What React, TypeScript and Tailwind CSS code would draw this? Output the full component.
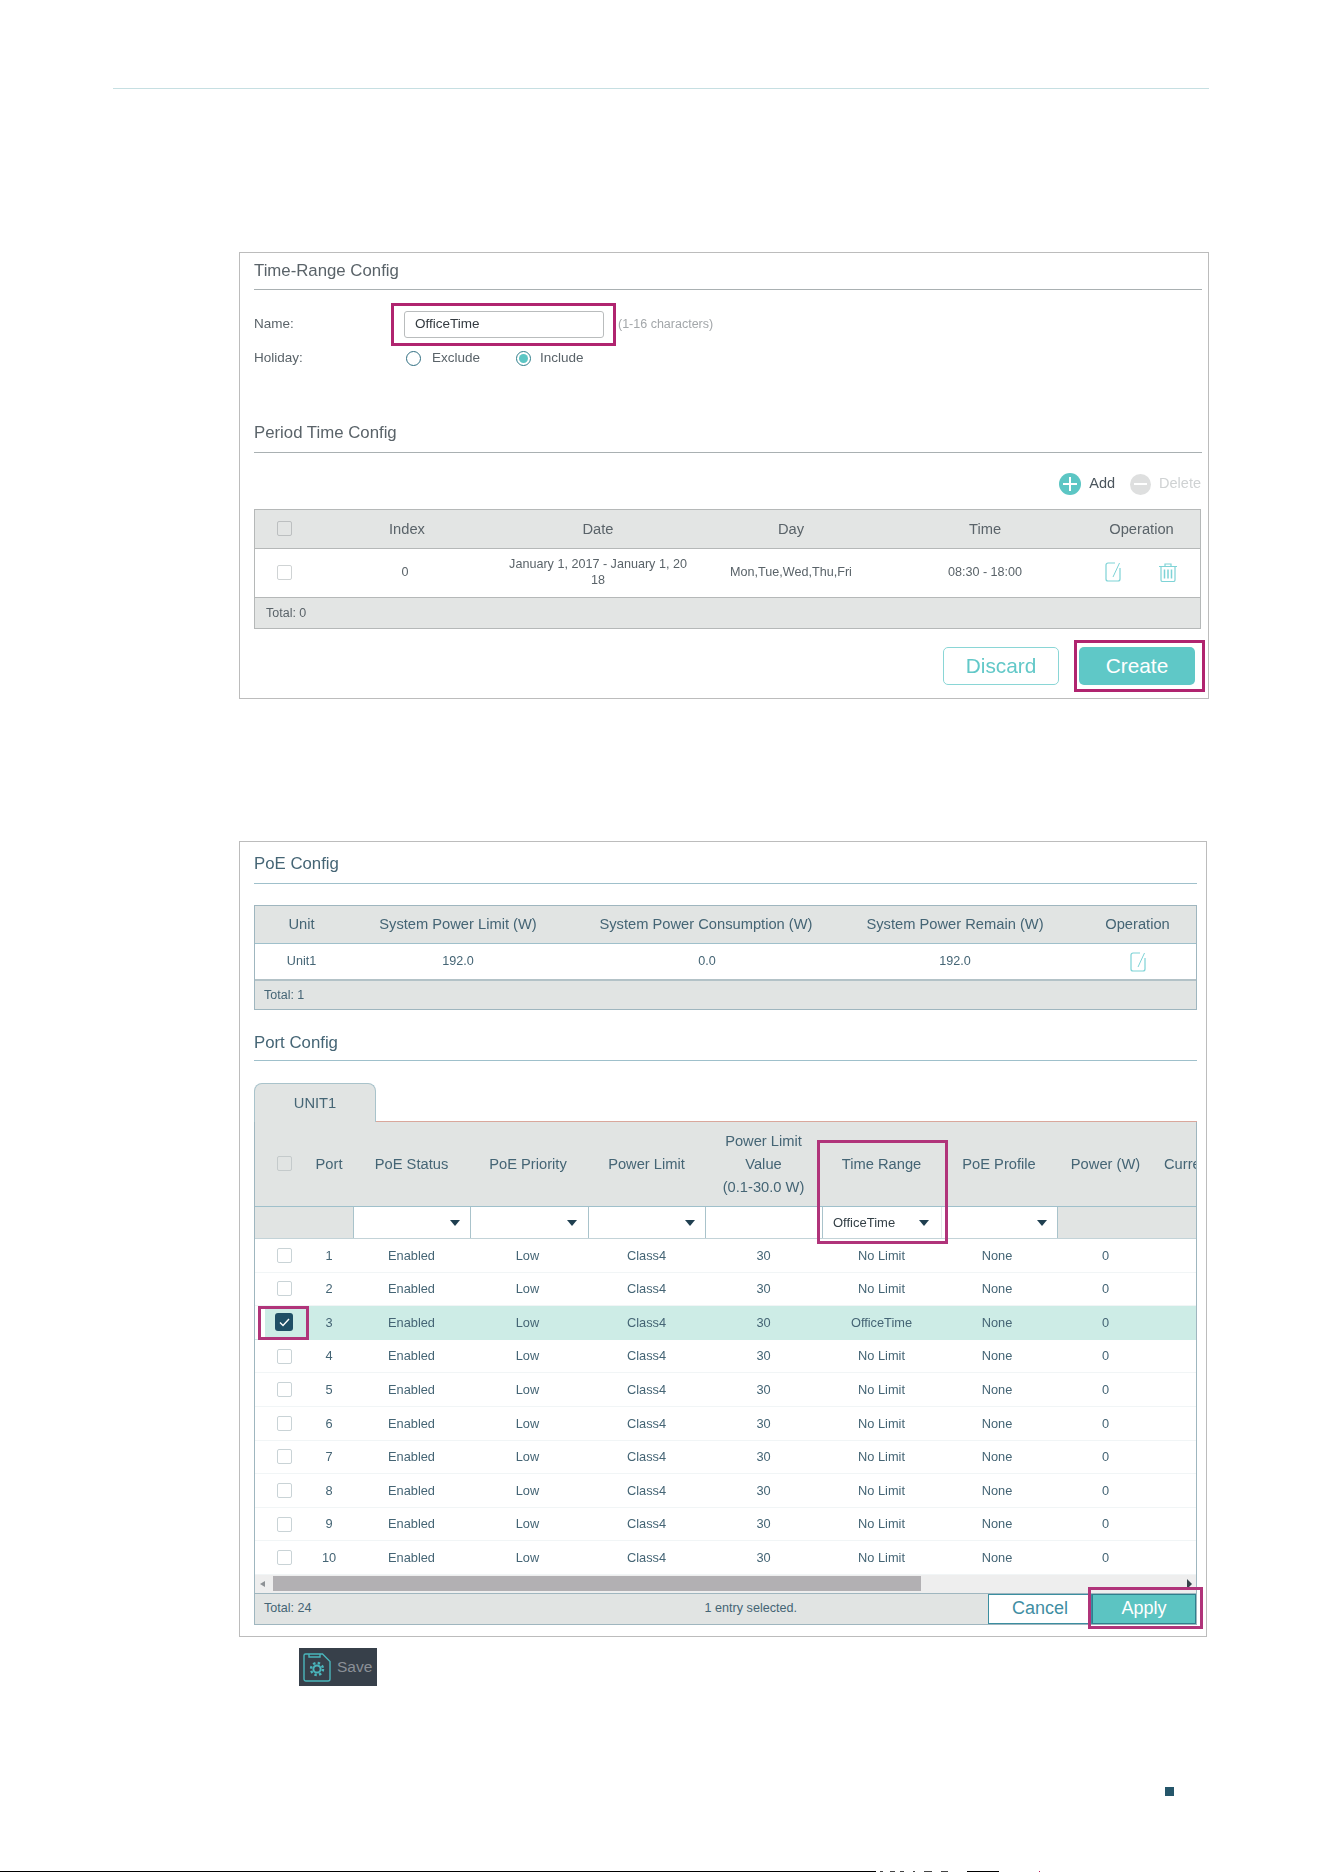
const ports = [1, 2, 3, 4, 5, 6, 7, 8, 9, 10];

function EditIcon() {
    return (
        <svg width="16" height="20" viewBox="0 0 16 20" fill="none" stroke="#7ed3d6" strokeWidth="1.2">
            <path d="M10 1H3a2 2 0 0 0-2 2v14a2 2 0 0 0 2 2h10a2 2 0 0 0 2-2V6" />
            <path d="M14.5 1L8 15" strokeWidth="1" />
        </svg>
    );
}

function TrashIcon() {
    return (
        <svg width="20" height="19" viewBox="0 0 20 19" fill="none" stroke="#7ed3d6" strokeWidth="1.2">
            <path d="M1 3.5h18M7 3.5V1h6v2.5" />
            <path d="M3 4v13a1.5 1.5 0 0 0 1.5 1.5h11A1.5 1.5 0 0 0 17 17V4" />
            <path d="M6.5 6.5v9M10 6.5v9M13.5 6.5v9" strokeWidth="1.5" />
        </svg>
    );
}

function SaveIcon() {
    return (
        <svg width="28" height="29" viewBox="0 0 28 29" fill="none" stroke="#4ab5bb" strokeWidth="1.4">
            <path d="M2.5 1h17L27 8.5V26a2 2 0 0 1-2 2H3a2 2 0 0 1-2-2V2.5A1.5 1.5 0 0 1 2.5 1z" />
            <path d="M6 1v3h11V1" />
            <circle cx="14" cy="16" r="3.6" strokeWidth="2" />
            <circle cx="14" cy="16" r="6" strokeWidth="2.4" strokeDasharray="2.4 2.31" />
        </svg>
    );
}

function Arrow() {
    return <span className="h-0 w-0 border-x-[5px] border-t-[6px] border-x-transparent border-t-[#1f3f50]" />;
}

function Checkbox({ tone = "bg-white border-[#cfd3d4]" }: { tone?: string }) {
    return <span className={`block h-[15px] w-[15px] rounded-[2px] border ${tone}`} />;
}

function SectionTitle({ title, className }: { title: string; className: string }) {
    return <div className={`flex items-center border-b text-[16.8px] ${className}`}>{title}</div>;
}

function TimeRangePanel() {
    return (
        <div className="ml-[239px] mt-[163px] h-[447px] w-[970px] border border-[#bcbcbc] pl-[14px] pr-[6px] text-[#5a6369] blur-[0.25px]">
            <SectionTitle title="Time-Range Config" className="h-[37px] border-[#a9b0b2]" />

            <div className="mt-[21px] flex h-[27px] items-center text-[13.5px]">
                <span className="w-[150px]">Name:</span>
                <div className="relative">
                    <div className="flex h-[27px] w-[200px] items-center rounded-[3px] border border-[#b9bcbd] pl-[10px] text-[#333a40]">OfficeTime</div>
                    <div className="pointer-events-none absolute -bottom-[8px] -left-[13px] -right-[12px] -top-[8px] border-[3px] border-[#b0246f]" />
                </div>
                <span className="ml-[14px] text-[12.5px] text-[#a3a7aa]">(1-16 characters)</span>
            </div>

            <div className="mt-[7px] flex h-[26px] items-center text-[13.5px]">
                <span className="w-[152px]">Holiday:</span>
                <span className="h-[15px] w-[15px] rounded-full border border-[#2f6d80]" />
                <span className="ml-[11px] w-[84px]">Exclude</span>
                <span className="flex h-[15px] w-[15px] items-center justify-center rounded-full border border-[#2f7d8a]">
                    <span className="h-[9px] w-[9px] rounded-full bg-[#5cc6c4]" />
                </span>
                <span className="ml-[9px]">Include</span>
            </div>

            <SectionTitle title="Period Time Config" className="mt-[45px] h-[37px] border-[#a9b0b2] pb-[3px]" />

            <div className="mt-[20px] flex h-[22px] items-center justify-end pr-[1px] text-[14.5px]">
                <span className="flex h-[22px] w-[22px] items-center justify-center rounded-full bg-[#5cc6c4]">
                    <svg width="14" height="14" viewBox="0 0 14 14" stroke="#fff" strokeWidth="2"><path d="M7 0v14M0 7h14" /></svg>
                </span>
                <span className="ml-[8px] text-[#4b555d]">Add</span>
                <span className="ml-[15px] flex h-[21px] w-[21px] items-center justify-center rounded-full bg-[#dedfdf]">
                    <span className="h-[2px] w-[13px] bg-white" />
                </span>
                <span className="ml-[8px] text-[#cfd2d3]">Delete</span>
            </div>

            <div className="mr-[1px] mt-[14px] border border-[#b5b8b8]">
                <div className="grid h-[39px] grid-cols-[59px_186px_196px_190px_198px_115px] items-center border-b border-[#b5b8b8] bg-[#e3e5e4] text-center text-[14.7px]">
                    <span className="-mt-[2px] flex justify-center"><Checkbox tone="border-[#bcbfc0]" /></span>
                    <span className="pt-[1px]">Index</span>
                    <span className="pt-[1px]">Date</span>
                    <span className="pt-[1px]">Day</span>
                    <span className="pt-[1px]">Time</span>
                    <span className="pt-[1px]">Operation</span>
                </div>
                <div className="grid h-[48px] grid-cols-[59px_186px_196px_190px_198px_115px] items-center pb-[2px] text-center text-[12.6px] leading-[16px]">
                    <span className="flex justify-center"><Checkbox /></span>
                    <span className="pr-[4px]">0</span>
                    <span className="break-all px-[7px]">January 1, 2017 - January 1, 2018</span>
                    <span>Mon,Tue,Wed,Thu,Fri</span>
                    <span>08:30 - 18:00</span>
                    <span className="flex items-center justify-between pl-[21px] pr-[21px]">
                        <EditIcon />
                        <TrashIcon />
                    </span>
                </div>
                <div className="flex h-[31px] items-center border-t border-[#b5b8b8] bg-[#e3e5e4] pl-[11px] text-[12.5px]">Total: 0</div>
            </div>

            <div className="mt-[18px] flex justify-end pr-[7px] text-[20.8px]">
                <button className="h-[38px] w-[116px] rounded-[5px] border border-[#8ad6d6] text-[#62c8c8]">Discard</button>
                <div className="relative ml-[20px]">
                    <button className="h-[38px] w-[116px] rounded-[5px] bg-[#5fc8c7] text-white">Create</button>
                    <div className="pointer-events-none absolute -bottom-[7px] -left-[5px] -right-[10px] -top-[7px] border-[3px] border-[#b0246f]" />
                </div>
            </div>
        </div>
    );
}

function PoePanel() {
    return (
        <div className="ml-[239px] mt-[142px] h-[796px] w-[968px] border border-[#bcbcbc] pl-[14px] pr-[9px] text-[#456575] blur-[0.4px]">
            <SectionTitle title="PoE Config" className="h-[42px] border-[#9fc0cb] pt-[2px]" />

            <div className="mt-[21px] border border-[#9fb6bf]">
                <div className="grid h-[38px] grid-cols-[95px_216px_282px_214px_134px] items-center border-b border-[#9fc0cb] bg-[#e1e4e3] text-center text-[14.7px]">
                    <span className="pr-[2px]">Unit</span>
                    <span>System Power Limit (W)</span>
                    <span className="pr-[2px]">System Power Consumption (W)</span>
                    <span>System Power Remain (W)</span>
                    <span className="pl-[17px]">Operation</span>
                </div>
                <div className="grid h-[35px] grid-cols-[95px_216px_282px_214px_134px] items-center text-center text-[12.6px]">
                    <span className="pr-[2px]">Unit1</span>
                    <span>192.0</span>
                    <span>0.0</span>
                    <span>192.0</span>
                    <span className="flex justify-center pl-[17px]"><EditIcon /></span>
                </div>
                <div className="flex h-[30px] items-center border-t-2 border-[#b3c2c7] bg-[#e1e4e3] pl-[9px] text-[12.5px]">Total: 1</div>
            </div>

            <SectionTitle title="Port Config" className="mt-[14px] h-[37px] border-[#9fc0cb] pt-[1px]" />

            <div className="mt-[22px] flex h-[39px]">
                <div className="flex h-[39px] w-[122px] justify-center rounded-t-[8px] border border-b-0 border-[#a9c3cb] bg-[#e1e4e3] pt-[8px] text-[14.7px]">UNIT1</div>
                <div className="flex-1 border-b border-[#d9a79c]" />
            </div>

            <div className="relative h-[503px] border-x border-b border-[#9fb6bf]">
                <div className="grid h-[85px] grid-cols-[50px_48px_117px_118px_117px_117px_119px_116px_97px_42px] items-center overflow-hidden border-b border-[#9fc0cb] bg-[#e1e4e3] text-center text-[14.7px] leading-[23px]">
                    <span className="-mt-[1px] flex justify-center pl-[8px]"><Checkbox tone="border-[#c4cacb]" /></span>
                    <span>Port</span>
                    <span>PoE Status</span>
                    <span className="pr-[2px]">PoE Priority</span>
                    <span>Power Limit</span>
                    <span>Power Limit<br />Value<br />(0.1-30.0 W)</span>
                    <span>Time Range</span>
                    <span>PoE Profile</span>
                    <span>Power (W)</span>
                    <span className="whitespace-nowrap pl-[10px] text-left">Curre</span>
                </div>

                <div className="grid h-[32px] grid-cols-[50px_48px_117px_118px_117px_117px_119px_116px_97px_42px] border-b border-[#c3d3d8] text-[13px] text-[#333f46]">
                    <span className="bg-[#e1e4e3]" />
                    <span className="bg-[#e1e4e3]" />
                    <span className="flex items-center justify-end border-l border-[#a9c3cb] pr-[10px]"><Arrow /></span>
                    <span className="flex items-center justify-end border-l border-[#a9c3cb] pr-[11px]"><Arrow /></span>
                    <span className="flex items-center justify-end border-l border-[#a9c3cb] pr-[10px]"><Arrow /></span>
                    <span className="border-l border-[#a9c3cb]" />
                    <span className="flex items-center justify-between border-l border-[#a9c3cb] pl-[10px] pr-[12px]">OfficeTime<Arrow /></span>
                    <span className="flex items-center justify-end border-l border-[#e4e8e9] pr-[10px]"><Arrow /></span>
                    <span className="border-l border-[#a9c3cb] bg-[#e1e4e3]" />
                    <span className="bg-[#e1e4e3]" />
                </div>

                {ports.map(port => (
                    <div
                        key={port}
                        className={`grid h-[33.6px] grid-cols-[50px_48px_117px_118px_117px_117px_119px_116px_97px_42px] items-center border-b text-center text-[12.8px] ${port === 3 ? "border-transparent bg-[#cdece6]" : "border-[#f1f5f6]"}`}
                    >
                        <span className={`flex h-full items-center justify-center pl-[8px] ${port === 3 ? "bg-[linear-gradient(to_right,white_10px,transparent_10px)]" : ""}`}>
                            {port === 3 ? (
                                <span className="flex h-[18px] w-[18px] items-center justify-center rounded-[3px] bg-[#1f4f66]">
                                    <svg width="11" height="9" viewBox="0 0 11 9" fill="none" stroke="#fff" strokeWidth="1.4"><path d="M1 4.5L4 7.5L10 1" /></svg>
                                </span>
                            ) : (
                                <Checkbox tone="bg-white border-[#c9d3d6]" />
                            )}
                        </span>
                        <span>{port}</span>
                        <span>Enabled</span>
                        <span className="pr-[3px]">Low</span>
                        <span>Class4</span>
                        <span>30</span>
                        <span>{port === 3 ? "OfficeTime" : "No Limit"}</span>
                        <span className="pr-[4px]">None</span>
                        <span>0</span>
                        <span />
                    </div>
                ))}

                <div className="flex h-[18px] items-center bg-[#eeeeee]">
                    <span className="ml-[5px] h-0 w-0 border-y-[3px] border-r-[5px] border-y-transparent border-r-[#8d9195]" />
                    <span className="ml-[8px] h-[15px] w-[648px] bg-[#b2b0b3]" />
                    <span className="ml-auto mr-[4px] h-0 w-0 border-y-[5px] border-l-[5px] border-y-transparent border-l-[#37424a]" />
                </div>

                <div className="relative flex h-[31px] items-center border-t border-[#9fb6bf] bg-[#e1e4e3] pl-[9px] text-[12.6px]">
                    <span>Total: 24</span>
                    <span className="ml-[393px]">1 entry selected.</span>
                    <div className="absolute bottom-0 right-0 top-0 flex text-[18px]">
                        <button className="w-[104px] border border-[#3b8ea0] bg-white text-[#3f8ea3]">Cancel</button>
                        <button className="w-[104px] border border-[#2f7f8d] bg-[#5cc4c2] text-white">Apply</button>
                    </div>
                </div>

                <div className="pointer-events-none absolute left-[562px] top-[18px] h-[104px] w-[131px] border-[3px] border-[#b0347a]" />
                <div className="pointer-events-none absolute left-[3px] top-[184px] h-[34px] w-[51px] border-[3px] border-[#b0347a]" />
                <div className="pointer-events-none absolute bottom-[-5px] right-[-7px] h-[42px] w-[115px] border-[3px] border-[#b0347a]" />
            </div>
        </div>
    );
}

export default function App() {
    return (
        <div className="flex h-[1872px] w-[1324px] flex-col bg-white pt-[88px] font-['Liberation_Sans',Arial,sans-serif]">
            <div className="ml-[113px] h-[1px] w-[1096px] bg-[#c6dfe2]" />

            <TimeRangePanel />
            <PoePanel />

            <div className="ml-[299px] mt-[11px] flex h-[38px] w-[78px] items-center bg-[#37404a] pl-[4px] text-[15.5px] text-[#8b9097]">
                <SaveIcon />
                <span className="ml-[6px]">Save</span>
            </div>

            <div className="ml-[1165px] mt-[101px] h-[9px] w-[9px] bg-[#25566a]" />

            <div className="mt-auto flex h-[1px] w-[1040px]">
                <span className="w-[876px] bg-black" />
                <span className="ml-[4px] w-[3px] bg-[#444444]" />
                <span className="ml-[7px] w-[5px] bg-[#444444]" />
                <span className="ml-[5px] w-[4px] bg-[#444444]" />
                <span className="ml-[9px] w-[2px] bg-[#444444]" />
                <span className="ml-[9px] w-[8px] bg-[#444444]" />
                <span className="ml-[9px] w-[7px] bg-[#444444]" />
                <span className="ml-[19px] w-[32px] bg-black" />
                <span className="ml-[40px] w-[1px] bg-[#c2185b]" />
            </div>
        </div>
    );
}
